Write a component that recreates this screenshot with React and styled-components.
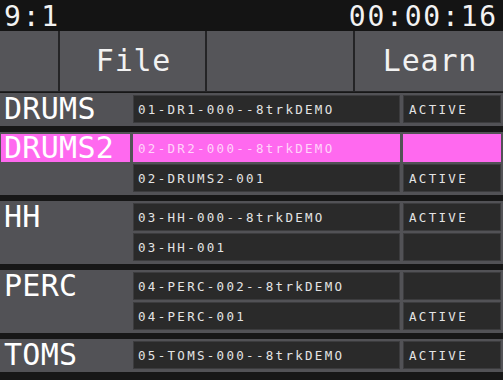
import React from "react";
import styled, { createGlobalStyle } from "styled-components";

const colors = {
  black: "#141414",
  gap: "#171717",
  button: "#555559",
  group: "#525256",
  cell: "#2a2a2a",
  cellEdge: "#3c3c3e",
  pink: "#ff69ef",
  pinkText: "#ffd4fa",
  text: "#f2f2f2",
  slotText: "#e4e4e4",
};

const mono = `"DejaVu Sans Mono", "Liberation Mono", monospace`;

const groups = [
  { name: "DRUMS", slots: [{ file: "01-DR1-000--8trkDEMO", status: "ACTIVE" }] },
  {
    name: "DRUMS2",
    selected: true,
    slots: [
      { file: "02-DR2-000--8trkDEMO", status: "", selected: true },
      { file: "02-DRUMS2-001", status: "ACTIVE" },
    ],
  },
  {
    name: "HH",
    slots: [
      { file: "03-HH-000--8trkDEMO", status: "ACTIVE" },
      { file: "03-HH-001", status: "" },
    ],
  },
  {
    name: "PERC",
    slots: [
      { file: "04-PERC-002--8trkDEMO", status: "" },
      { file: "04-PERC-001", status: "ACTIVE" },
    ],
  },
  { name: "TOMS", slots: [{ file: "05-TOMS-000--8trkDEMO", status: "ACTIVE" }] },
];

const GlobalStyle = createGlobalStyle`
  html, body {
    margin: 0;
    padding: 0;
    background: ${colors.gap};
  }
  * {
    box-sizing: border-box;
  }
`;

const Screen = styled.div`
  width: 503px;
  height: 380px;
  overflow: hidden;
  background: ${colors.gap};
  font-family: ${mono};
  color: ${colors.text};
`;

// clock text sits at the top edge, keep its line box inside the page
const TopBar = styled.div`
  height: 31px;
  background: ${colors.black};
  display: flex;
  justify-content: space-between;
  align-items: flex-start;
  padding: 0 5px 0 4px;
  font-size: 28px;
  letter-spacing: 1.8px;
`;

const Clock = styled.span`
  line-height: normal;
`;

const ButtonRow = styled.div`
  display: grid;
  grid-template-columns: 58px 145px 146px 1fr;
  column-gap: 2px;
  height: 61px;
  padding-bottom: 1px;
  background: #242426;
`;

const Button = styled.div`
  background: ${colors.button};
  display: flex;
  align-items: center;
  justify-content: center;
  font-size: 30px;
  letter-spacing: 0.8px;
  padding: 0 0 1px 2px;
`;

const Groups = styled.div`
  display: flex;
  flex-direction: column;
  gap: 6px;
  padding-top: 1px;
`;

const Group = styled.div`
  display: grid;
  grid-template-columns: 129px 267px 1fr;
  grid-auto-rows: 28px;
  column-gap: 3px;
  row-gap: 2px;
  padding: 2px 2px 3px 1px;
  background: ${colors.group};
`;

const Label = styled.div`
  grid-column: 1;
  grid-row: 1;
  display: flex;
  align-items: center;
  padding-left: 3px;
  font-size: 30px;
  letter-spacing: 0.3px;
  line-height: 28px;
  color: #ffffff;
  background: ${p => (p.$selected ? colors.pink : "transparent")};
`;

const Cell = styled.div`
  grid-column: ${p => p.$col};
  display: flex;
  align-items: center;
  padding-left: ${p => (p.$col === 3 ? "5px" : "4px")};
  font-size: 12.5px;
  letter-spacing: 2.3px;
  white-space: nowrap;
  overflow: hidden;
  background: ${p => (p.$selected ? colors.pink : colors.cell)};
  border: 1px solid ${p => (p.$selected ? colors.pink : colors.cellEdge)};
  color: ${p => (p.$selected ? colors.pinkText : colors.slotText)};
`;

function SlotGroup({ group }) {
  return (
    <Group>
      <Label $selected={group.selected}>{group.name}</Label>
      {group.slots.map(slot => (
        <React.Fragment key={slot.file}>
          <Cell $col={2} $selected={slot.selected}>
            {slot.file}
          </Cell>
          <Cell $col={3} $selected={slot.selected}>
            {slot.status}
          </Cell>
        </React.Fragment>
      ))}
    </Group>
  );
}

export default function App() {
  return (
    <>
      <GlobalStyle />
      <Screen>
        <TopBar>
          <Clock>9:1</Clock>
          <Clock>00:00:16</Clock>
        </TopBar>
        <ButtonRow>
          <Button />
          <Button>File</Button>
          <Button />
          <Button>Learn</Button>
        </ButtonRow>
        <Groups>
          {groups.map(g => (
            <SlotGroup key={g.name} group={g} />
          ))}
        </Groups>
      </Screen>
    </>
  );
}
